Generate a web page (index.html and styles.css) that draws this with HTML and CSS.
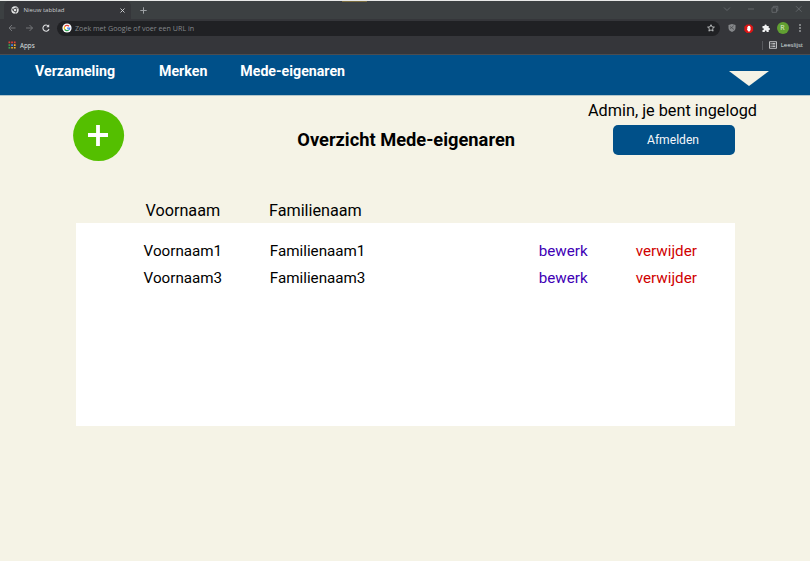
FILE: index.html
```html
<!DOCTYPE html>
<html lang="nl">
<head>
<meta charset="utf-8">
<title>Overzicht Mede-eigenaren</title>
<link rel="stylesheet" href="styles.css">
</head>
<body>
<div class="browser">
  <div class="tabs">
    <div class="tab">
      <svg class="chrome" viewBox="0 0 8 8"><circle cx="4" cy="4" r="3.7" fill="#e5e6e7"/><circle cx="4" cy="4" r="1.75" fill="#dedfe0" stroke="#35363a" stroke-width=".8"/><path d="M4 2.1h3.3M2.4 5 .8 2.2M5.6 5 4 7.8" stroke="#35363a" stroke-width=".7"/></svg>
      <span class="tab-title">Nieuw tabblad</span>
      <svg class="close" viewBox="0 0 5 5"><path d="m.5.5 4 4m0-4-4 4" stroke="#d5d7d9" stroke-width=".9"/></svg>
    </div>
    <svg class="plus" viewBox="0 0 7 7"><path d="M3.5.3v6.4M.3 3.5h6.4" stroke="#9da1a4" stroke-width="1"/></svg>
    <svg class="window" viewBox="0 0 80 8" fill="none" stroke="#6b6f72" stroke-width=".8"><path d="m1 2.5 3 3 3-3M25 4h6M49 2.8h4.5v4.5H49zM50.3 2.5v-1.200h4.500v4.500h-1M73 1.200l5.500 5.500m0-5.500L73 6.700"/></svg>
    <span class="marker"></span>
  </div>
  <div class="toolbar">
    <svg class="arrows" viewBox="0 0 42 10" fill="none" stroke="#7b7d80" stroke-width=".9"><path d="M7.500 5H1m3-3L1 5l3 3M18 5h6.500m-3-3 3 3-3 3"/><path d="M40.500 3.200A3.100 3.100 0 1 0 41 6" stroke="#dedfe1" stroke-width="1.100"/><path d="M41.200 1.200v3h-3z" fill="#dedfe1" stroke="none"/></svg>
    <div class="address">
      <svg class="google" viewBox="0 0 10 10"><circle cx="5" cy="5" r="4.600" fill="#fff"/><g fill="none" stroke-width="1.300"><path d="M7 3.200A2.700 2.700 0 0 0 2.600 3.800" stroke="#ea4335"/><path d="M2.600 3.800A2.700 2.700 0 0 0 2.700 6.400" stroke="#fbbc05"/><path d="M2.700 6.400A2.700 2.700 0 0 0 6.700 7" stroke="#34a853"/><path d="M6.700 7a2.700 2.700 0 0 0 1-1.900H5" stroke="#4285f4"/></g></svg>
      <span class="hint">Zoek met Google of voer een URL in</span>
      <svg class="star" viewBox="0 0 8 8"><path d="m4 .7 1 2.200 2.400.2-1.800 1.600.5 2.400L4 5.900 1.900 7.100l.5-2.400L.6 3.100 3 2.900z" fill="none" stroke="#d8dadc" stroke-width=".8"/></svg>
    </div>
    <svg class="shield" viewBox="0 0 8 8"><path d="M4 0 7.500 1v3C7.500 6 6 7.300 4 8 2 7.300.5 6 .5 4V1z" fill="#85878a"/><path d="m2 2.500 4 3M2.200 4.700l3.500-3" stroke="#4c4e51" stroke-width=".8"/></svg>
    <svg class="blocker" viewBox="0 0 10 10"><path d="M3 .4h4L9.600 3v4L7 9.600H3L.4 7V3z" fill="#dc1515"/><path d="M3.500 2.800h.7V2.200h.7v-.4h.7v.4h.7v.6h.6v3.400L5.900 8H4.500L3 5.500l.5-.4z" fill="#fff"/></svg>
    <svg class="puzzle" viewBox="0 0 8 8"><path d="M.5 2h2V1.500a1.100 1.100 0 0 1 2.200 0V2h2v2h.3a1 1 0 0 1 0 2h-.3v2H4.600v-.5a.9.9 0 0 0-1.800 0V8H.5V6H1a.9.9 0 0 0 0-1.800H.5z" fill="#f1f2f3"/></svg>
    <span class="avatar">R</span>
    <svg class="more" viewBox="0 0 2 8" fill="#dedfe1"><circle cx="1" cy="1" r=".8"/><circle cx="1" cy="4" r=".8"/><circle cx="1" cy="7" r=".8"/></svg>
  </div>
  <div class="bookmarks">
    <svg class="apps" viewBox="0 0 8 8"><path d="M.5.500h1.700v1.700H.5zM3.200.500h1.700v1.700H3.200zM5.900.500h1.700v1.700H5.900z" fill="#e34234"/><path d="M.5 3.200h1.700v1.700H.5z" fill="#3ca354"/><path d="M3.200 3.200h1.700v1.700H3.200z" fill="#4285f4"/><path d="M5.900 3.200h1.700v1.700H5.900zM3.200 5.900h1.700v1.700H3.200zM5.900 5.900h1.700v1.700H5.900z" fill="#f3b32b"/><path d="M.5 5.900h1.700v1.700H.5z" fill="#3ca354"/></svg>
    <span class="apps-label">Apps</span>
    <span class="rule"></span>
    <svg class="list" viewBox="0 0 8 8" fill="none" stroke="#dedfe1" stroke-width=".8"><path d="M.5.700h7v6.600h-7zM1.600 2.500h1m.7 0h3M1.600 4h1m.7 0h3M1.600 5.500h1m.7 0h3"/></svg>
    <span class="list-label">Leeslijst</span>
  </div>
</div>
<nav class="nav">
  <a class="verzameling">Verzameling</a>
  <a class="merken">Merken</a>
  <a>Mede-eigenaren</a>
  <svg class="caret" viewBox="0 0 40 15"><path d="M0 0h40L20 15z" fill="#f5f3e6"/></svg>
</nav>
<main>
  <header class="head">
    <svg class="add" viewBox="0 0 52 52"><circle cx="25.600" cy="25.600" r="25.500" fill="#54bf00"/><path d="M25 15v21M15 25h20" stroke="#fff" stroke-width="3.800"/></svg>
    <h1>Overzicht Mede-eigenaren</h1>
    <div class="account"><span class="status">Admin, je bent ingelogd</span><button>Afmelden</button></div>
  </header>
  <div class="columns"><span>Voornaam</span><span>Familienaam</span></div>
  <section class="panel">
    <div class="row"><span>Voornaam1</span><span>Familienaam1</span><a class="edit">bewerk</a><a class="delete">verwijder</a></div>
    <div class="row"><span>Voornaam3</span><span>Familienaam3</span><a class="edit">bewerk</a><a class="delete">verwijder</a></div>
  </section>
</main>
</body>
</html>
```
FILE: styles.css
```css
* { box-sizing: border-box; }
body { margin: 0; width: 810px; height: 561px; overflow: hidden; background: #f5f3e6; color: #000; font-family: Roboto, sans-serif; }
svg { display: block; flex: none; }
span, a { white-space: nowrap; }
.browser { height: 55px; background: #35363a; border-top: 1px solid #e8e9e8; border-bottom: 1px solid #4b4d50; font-family: "Open Sans", sans-serif; }
.tabs { height: 18px; display: flex; align-items: center; background: #3c4042; position: relative; padding-left: 4px; }
.tab { width: 127px; height: 18px; display: flex; align-items: center; padding: 0 6px 0 7px; background: #35363a; border-radius: 5px 5px 0 0; }
.chrome { width: 8px; height: 8px; }
.tab-title { margin-left: 4.500px; font-size: 6.050px; color: #c9cbce; }
.close { width: 5px; height: 5px; margin-left: auto; }
.plus { width: 7px; height: 7px; margin-left: 8.500px; }
.window { width: 80px; height: 8px; margin: -2px 7.500px 0 auto; }
.marker { position: absolute; left: 342px; top: 0; width: 25px; height: 1px; background: #796b3e; }
.toolbar { height: 18.500px; display: flex; align-items: center; padding-left: 7.500px; }
.arrows { width: 42px; height: 10px; }
.address { width: 663px; height: 15px; margin-left: 7.500px; display: flex; align-items: center; padding: 0 5px; background: #202124; border-radius: 8px; }
.google { width: 10px; height: 10px; }
.hint { margin-left: 3px; font-size: 7.150px; color: #85888b; }
.star { width: 8px; height: 8px; margin-left: auto; }
.shield { width: 8px; height: 8px; margin-left: 8px; }
.blocker { width: 9.500px; height: 9.500px; margin-left: 8px; }
.puzzle { width: 8px; height: 8px; margin-left: 8px; }
.avatar { width: 12px; height: 12px; margin-left: 7px; border-radius: 50%; background: #61a032; color: #e4efda; font-size: 7px; line-height: 12px; text-align: center; }
.more { width: 2px; height: 8px; margin-left: 10px; }
.bookmarks { height: 15.500px; display: flex; align-items: center; padding: 0 7px 0 8px; font-size: 6.300px; color: #dfe0e2; }
.apps, .list { width: 8px; height: 8px; }
.apps-label { margin-left: 4px; }
.rule { width: 1px; height: 9px; margin: 0 6px 0 auto; background: #56585c; }
.list-label { margin-left: 4px; font-size: 6px; }
.nav { height: 41px; display: flex; align-items: flex-start; padding: 8px 41.500px 0 35px; background: #005089; border-bottom: 1px solid #b3c6cb; color: #fff; font-size: 14.2px; font-weight: 700; line-height: 17px; }
.verzameling { width: 124px; }
.merken { width: 81.300px; }
.caret { width: 40px; height: 15px; margin: 7.500px 0 0 auto; }
main { padding: 0 75px 0 76px; }
.head { height: 100px; display: flex; }
.add { width: 52px; height: 52px; margin: 14px 0 0 -3px; }
h1 { margin: 33px 0 0 172.300px; font-size: 18.280px; line-height: 22px; white-space: nowrap; }
.account { width: 122px; margin-left: auto; display: flex; flex-direction: column; }
.status { margin: 5px 0 5px -25px; font-size: 16.250px; line-height: 19px; }
button { height: 30px; padding: 0 2px 0 0; border: 0; border-radius: 5px; background: #005089; color: #f4f7fa; font: 12.100px Roboto, sans-serif; }
.columns { height: 27px; display: grid; grid-template-columns: 123.500px auto; padding: 5px 0 0 69.500px; font-size: 16.200px; line-height: 19px; }
.panel { height: 203px; padding: 14px 0 0 67.600px; background: #fff; }
.row { height: 27.500px; display: grid; grid-template-columns: 126.200px 269px 97px auto; align-items: center; font-size: 15.200px; }
.edit { color: #4000b5; }
.delete { color: #d00000; }
```
